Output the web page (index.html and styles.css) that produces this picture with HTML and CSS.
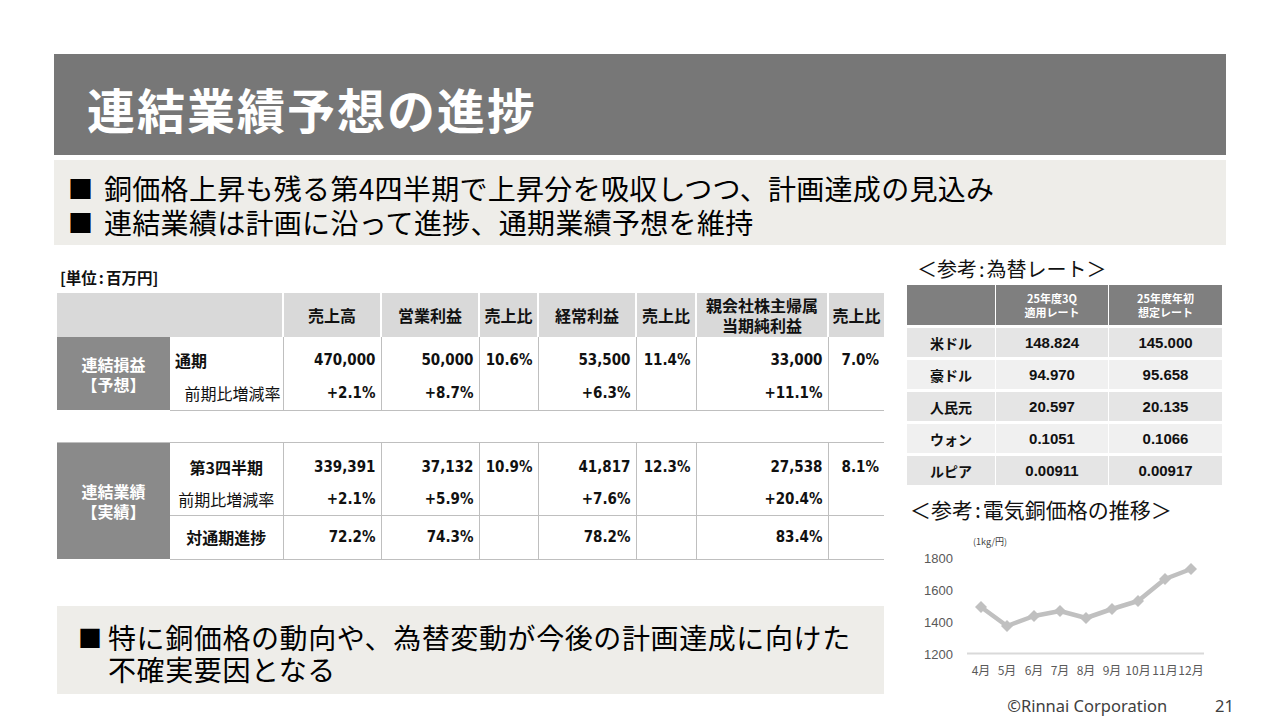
FILE: index.html
```html
<!DOCTYPE html>
<html lang="ja">
<head>
<meta charset="utf-8">
<title>連結業績予想の進捗</title>
<link rel="stylesheet" href="styles.css">
</head>
<body>
<div class="slide">
  <header class="title-bar"><h1>連結業績予想の進捗</h1></header>
  <section class="summary">
    <div class="sum-line"><span class="sq">■</span><span>銅価格上昇も残る第4四半期で上昇分を吸収しつつ、計画達成の見込み</span></div>
    <div class="sum-line"><span class="sq">■</span><span>連結業績は計画に沿って進捗、通期業績予想を維持</span></div>
  </section>
  <div class="content">
    <div class="left">
      <div class="unit">[単位<span class="colon">:</span>百万円]</div>
      <table class="pl pl1">
        <colgroup>
          <col class="c-grp"><col class="c-lbl"><col class="c-num"><col class="c-num"><col class="c-r1"><col class="c-num"><col class="c-r2"><col class="c-np"><col class="c-r3">
        </colgroup>
        <thead>
          <tr>
            <th colspan="2" class="blank"></th>
            <th>売上高</th><th>営業利益</th><th>売上比</th><th>経常利益</th><th>売上比</th><th class="two">親会社株主帰属<br>当期純利益</th><th>売上比</th>
          </tr>
        </thead>
        <tbody>
          <tr class="r-main">
            <td rowspan="2" class="grp">連結損益<br>【予想】</td>
            <td class="lbl lbl-left">通期</td>
            <td class="num">470,000</td><td class="num">50,000</td><td class="num">10.6%</td><td class="num">53,500</td><td class="num">11.4%</td><td class="num">33,000</td><td class="num">7.0%</td>
          </tr>
          <tr class="r-sub last">
            <td class="lbl lbl-right">前期比増減率</td>
            <td class="num">+2.1%</td><td class="num">+8.7%</td><td class="num"></td><td class="num">+6.3%</td><td class="num"></td><td class="num">+11.1%</td><td class="num"></td>
          </tr>
        </tbody>
      </table>
      <table class="pl pl2">
        <colgroup>
          <col class="c-grp"><col class="c-lbl"><col class="c-num"><col class="c-num"><col class="c-r1"><col class="c-num"><col class="c-r2"><col class="c-np"><col class="c-r3">
        </colgroup>
        <tbody>
          <tr class="r-q3">
            <td rowspan="3" class="grp">連結業績<br>【実績】</td>
            <td class="lbl lbl-center">第3四半期</td>
            <td class="num">339,391</td><td class="num">37,132</td><td class="num">10.9%</td><td class="num">41,817</td><td class="num">12.3%</td><td class="num">27,538</td><td class="num">8.1%</td>
          </tr>
          <tr class="r-sub2">
            <td class="lbl lbl-center normal">前期比増減率</td>
            <td class="num">+2.1%</td><td class="num">+5.9%</td><td class="num"></td><td class="num">+7.6%</td><td class="num"></td><td class="num">+20.4%</td><td class="num"></td>
          </tr>
          <tr class="r-prog">
            <td class="lbl lbl-center">対通期進捗</td>
            <td class="num">72.2%</td><td class="num">74.3%</td><td class="num"></td><td class="num">78.2%</td><td class="num"></td><td class="num">83.4%</td><td class="num"></td>
          </tr>
        </tbody>
      </table>
      <section class="note">
        <span class="sq2">■</span>
        <span class="note-text">特に銅価格の動向や、為替変動が今後の計画達成に向けた<br>不確実要因となる</span>
      </section>
    </div>
    <div class="right">
      <div class="ref-title">＜参考<span class="colon">:</span>為替レート＞</div>
      <div class="fx">
        <div class="fx-h"></div>
        <div class="fx-h">25年度3Q<br>適用レート</div>
        <div class="fx-h">25年度年初<br>想定レート</div>

        <div class="fx-c lbl dark">米ドル</div><div class="fx-c val dark">148.824</div><div class="fx-c val dark">145.000</div>
        <div class="fx-c lbl light">豪ドル</div><div class="fx-c val light">94.970</div><div class="fx-c val light">95.658</div>
        <div class="fx-c lbl dark">人民元</div><div class="fx-c val dark">20.597</div><div class="fx-c val dark">20.135</div>
        <div class="fx-c lbl light">ウォン</div><div class="fx-c val light">0.1051</div><div class="fx-c val light">0.1066</div>
        <div class="fx-c lbl dark">ルピア</div><div class="fx-c val dark">0.00911</div><div class="fx-c val dark">0.00917</div>
      </div>
      <div class="ref-title2">＜参考<span class="colon">:</span>電気銅価格の推移＞</div>
      <svg class="chart" width="320" height="150" viewBox="0 0 320 150" xmlns="http://www.w3.org/2000/svg">
        <text x="68" y="15" class="unit-lbl">(1kg/円)</text>
        <g class="ylab">
          <text x="48" y="33">1800</text>
          <text x="48" y="65">1600</text>
          <text x="48" y="97">1400</text>
          <text x="48" y="129">1200</text>
        </g>
        <line x1="62" y1="123.5" x2="299" y2="123.5" stroke="#d9d9d9" stroke-width="2"/>
        <polyline fill="none" stroke="#c0c0c0" stroke-width="4.5" stroke-linejoin="round"
          points="76,77 102,96 129,86 155,81 181,88 207,79 233,71 260,49 286,39"/>
        <g fill="#c0c0c0">
          <path d="M76 71 L82 77 L76 83 L70 77 Z"/>
          <path d="M102 90 L108 96 L102 102 L96 96 Z"/>
          <path d="M129 80 L135 86 L129 92 L123 86 Z"/>
          <path d="M155 75 L161 81 L155 87 L149 81 Z"/>
          <path d="M181 82 L187 88 L181 94 L175 88 Z"/>
          <path d="M207 73 L213 79 L207 85 L201 79 Z"/>
          <path d="M233 65 L239 71 L233 77 L227 71 Z"/>
          <path d="M260 43 L266 49 L260 55 L254 49 Z"/>
          <path d="M286 33 L292 39 L286 45 L280 39 Z"/>
        </g>
        <g class="xlab">
          <text x="76" y="145">4月</text>
          <text x="102" y="145">5月</text>
          <text x="129" y="145">6月</text>
          <text x="155" y="145">7月</text>
          <text x="181" y="145">8月</text>
          <text x="207" y="145">9月</text>
          <text x="233" y="145">10月</text>
          <text x="260" y="145">11月</text>
          <text x="286" y="145">12月</text>
        </g>
      </svg>
    </div>
  </div>
  <footer class="footer">
    <span class="copy">©Rinnai Corporation</span>
    <span class="page">21</span>
  </footer>
</div>
</body>
</html>
```

FILE: styles.css
```css
* { box-sizing: border-box; }
html, body { margin: 0; padding: 0; background: #fff; }
body {
  font-family: "Noto Sans CJK JP", "Noto Sans", sans-serif;
  color: #111;
}
.slide {
  width: 1280px;
  height: 720px;
  padding-top: 54px;
  overflow: hidden;
}
.title-bar {
  margin: 0 54px;
  height: 101px;
  background: #777777;
  display: flex;
  align-items: center;
  padding-left: 33px;
}
.title-bar h1 {
  margin: 0;
  color: #fff;
  font-size: 48px;
  font-weight: 700;
  letter-spacing: 2px;
  line-height: 1;
  padding-top: 6px;
}
.summary {
  margin: 5px 54px 0;
  height: 85px;
  background: #eeede9;
  padding: 11px 0 0 14px;
}
.sum-line {
  display: flex;
  font-size: 28px;
  letter-spacing: 0.3px;
  line-height: 34px;
  color: #000;
}
.sum-line .sq { width: 36px; font-size: 25px; letter-spacing: 0; }
.colon { padding: 0 2px; }
.content {
  display: flex;
  height: 449px;
  padding-left: 57px;
  gap: 23px;
}
.left { width: 827px; }
.right { width: 315px; }
.unit {
  margin-top: 20px;
  height: 24px;
  line-height: 24px;
  font-size: 15.5px;
  font-weight: 700;
  padding-left: 3px;
}
.pl {
  width: 827px;
  table-layout: fixed;
  border-collapse: collapse;
  margin-top: 4px;
}
.c-grp { width: 113px; }
.c-lbl { width: 113px; }
.c-num { width: 98px; }
.c-r1 { width: 59px; }
.c-r2 { width: 60px; }
.c-np { width: 132px; }
.c-r3 { width: 56px; }
.pl th {
  background: #d9d9d9;
  height: 44px;
  font-size: 16px;
  font-weight: 700;
  text-align: center;
  padding: 0;
  border-left: 2px solid #fff;
  line-height: 20px;
}
.pl th.blank { border-left: none; }
.pl th.two { font-size: 16px; line-height: 20px; }
.pl td {
  padding: 0;
  font-size: 15px;
}
.pl td.num {
  border-left: 1px solid #bfbfbf;
  text-align: right;
  padding-right: 5px;
  font-family: "DejaVu Sans Condensed", "Liberation Sans Narrow", "Liberation Sans", sans-serif;
  font-weight: 700;
  font-size: 15px;
  font-stretch: condensed;
}
.pl td.grp {
  background: #8a8a8a;
  color: #fff;
  font-weight: 700;
  font-size: 16px;
  line-height: 20px;
  text-align: center;
  vertical-align: middle;
}
.pl td.lbl { font-size: 16px; }
.lbl-left { font-weight: 700; padding-left: 5px !important; }
.lbl-right { text-align: right; padding-right: 2px !important; font-weight: 400; }
.lbl-center { text-align: center; font-weight: 700; }
.lbl-center.normal { font-weight: 400; }
.pl1 .r-main td { height: 40px; padding-top: 6px; }
.pl1 .r-main td.grp { padding-top: 0; }
.pl1 .r-sub td { height: 33px; }
.pl1 tr.last td { border-bottom: 1px solid #bfbfbf; }
.pl2 { margin-top: 31px; border-top: 1px solid #bfbfbf; }
.pl2 .r-q3 td { height: 41px; padding-top: 8px; }
.pl2 .r-q3 td.grp { padding-top: 0; }
.pl2 .r-sub2 td { height: 32px; border-bottom: 1px solid #bfbfbf; }
.pl2 .r-prog td { height: 44px; border-bottom: 1px solid #bfbfbf; }
.note {
  margin-top: 46px;
  height: 88px;
  background: #eeede9;
  display: flex;
  padding: 15px 0 0 21px;
  font-size: 28px;
  letter-spacing: 0.6px;
  line-height: 32px;
  color: #000;
}
.note .sq2 { width: 30px; font-size: 24px; letter-spacing: 0; }
.ref-title {
  margin-top: 12px;
  height: 24px;
  line-height: 24px;
  font-size: 20px;
  padding-left: 10px;
}
.fx {
  margin-top: 4px;
  display: grid;
  grid-template-columns: 88px 112px 113px;
  grid-template-rows: 40px repeat(5, 29px);
  column-gap: 1px;
  row-gap: 3px;
  width: 315px;
}
.fx-h {
  background: #7f7f7f;
  color: #fff;
  font-size: 11px;
  font-weight: 700;
  line-height: 14px;
  text-align: center;
  display: flex;
  align-items: center;
  justify-content: center;
}
.fx-c {
  display: flex;
  align-items: center;
  justify-content: center;
  font-weight: 700;
}
.fx-c.lbl { font-size: 14px; }
.fx-c.val { font-family: "Liberation Sans", Arial, sans-serif; font-size: 15px; }
.fx-c.dark { background: #e5e5e5; }
.fx-c.light { background: #f0f0f0; }
.ref-title2 {
  margin-top: 12px;
  height: 24px;
  line-height: 24px;
  font-size: 21px;
  padding-left: 3px;
}
.chart {
  display: block;
  margin-top: 9px;
  margin-left: -2px;
}
.chart .ylab text {
  font-family: "Liberation Sans", Arial, sans-serif;
  font-size: 13px;
  fill: #595959;
  text-anchor: end;
}
.chart .xlab text {
  font-family: "Noto Sans CJK JP", sans-serif;
  font-size: 12px;
  fill: #595959;
  text-anchor: middle;
}
.chart .unit-lbl {
  font-family: "Noto Sans CJK JP", sans-serif;
  font-size: 9px;
  fill: #404040;
}
.footer {
  display: flex;
  justify-content: flex-end;
  align-items: center;
  height: 22px;
  padding-right: 46px;
  gap: 48px;
  font-family: "Noto Sans", "Liberation Sans", sans-serif;
  font-size: 16.5px;
  color: #404040;
}
```
